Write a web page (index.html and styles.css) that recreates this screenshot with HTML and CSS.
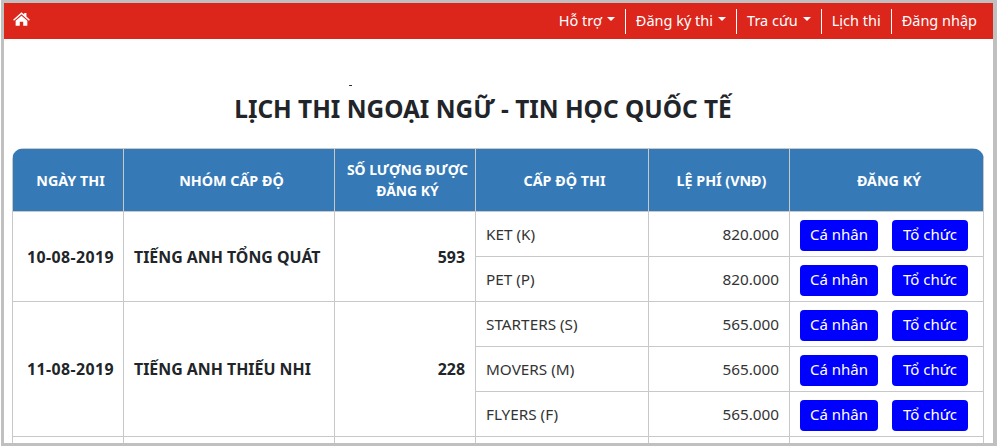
FILE: index.html
```html
<!DOCTYPE html>
<html lang="vi">
<head>
<meta charset="utf-8">
<title>Lịch thi</title>
<link rel="stylesheet" href="styles.css">
</head>
<body>
<div class="frame">
  <nav class="navbar">
    <a class="home" href="#"><svg viewBox="0 0 18 15" width="17" height="14" preserveAspectRatio="none"><path fill="#fff" d="M9 0.2 L11.9 2.8 V1.2 H14.2 V4.9 L17.9 8.2 L16.9 9.4 L9 2.5 L1.1 9.4 L0.1 8.2 Z M9 3.9 L15.2 9.3 V14.8 H10.8 V10.4 H7.2 V14.8 H2.8 V9.3 Z"/></svg></a>
    <ul class="menu">
      <li><a href="#">Hỗ trợ<i class="caret"></i></a></li>
      <li><a href="#">Đăng ký thi<i class="caret"></i></a></li>
      <li><a href="#">Tra cứu<i class="caret"></i></a></li>
      <li><a href="#">Lịch thi</a></li>
      <li><a href="#">Đăng nhập</a></li>
    </ul>
  </nav>
  <main class="content">
    <div class="mark"></div>
    <h1 class="title">LỊCH THI NGOẠI NGỮ - TIN HỌC QUỐC TẾ</h1>
    <div class="table-wrap">
      <table class="schedule">
        <colgroup>
          <col class="c1"><col class="c2"><col class="c3"><col class="c4"><col class="c5"><col class="c6">
        </colgroup>
        <thead>
          <tr><th>NGÀY THI</th><th>NHÓM CẤP ĐỘ</th><th class="narrow">SỐ LƯỢNG ĐƯỢC ĐĂNG KÝ</th><th>CẤP ĐỘ THI</th><th>LỆ PHÍ (VNĐ)</th><th>ĐĂNG KÝ</th></tr>
        </thead>
        <tbody>
          <tr><td rowspan="2" class="strong center date">10-08-2019</td><td rowspan="2" class="strong">TIẾNG ANH TỔNG QUÁT</td><td rowspan="2" class="strong right">593</td><td>KET (K)</td><td class="right">820.000</td><td class="actions"><a class="btn" href="#">Cá nhân</a><a class="btn" href="#">Tổ chức</a></td></tr>
          <tr><td>PET (P)</td><td class="right">820.000</td><td class="actions"><a class="btn" href="#">Cá nhân</a><a class="btn" href="#">Tổ chức</a></td></tr>
          <tr><td rowspan="3" class="strong center date">11-08-2019</td><td rowspan="3" class="strong">TIẾNG ANH THIẾU NHI</td><td rowspan="3" class="strong right">228</td><td>STARTERS (S)</td><td class="right">565.000</td><td class="actions"><a class="btn" href="#">Cá nhân</a><a class="btn" href="#">Tổ chức</a></td></tr>
          <tr><td>MOVERS (M)</td><td class="right">565.000</td><td class="actions"><a class="btn" href="#">Cá nhân</a><a class="btn" href="#">Tổ chức</a></td></tr>
          <tr><td>FLYERS (F)</td><td class="right">565.000</td><td class="actions"><a class="btn" href="#">Cá nhân</a><a class="btn" href="#">Tổ chức</a></td></tr>
          <tr><td></td><td></td><td></td><td></td><td></td><td></td></tr>
        </tbody>
      </table>
    </div>
  </main>
</div>
</body>
</html>
```
FILE: styles.css
```css
* { box-sizing: border-box; }
html, body { margin: 0; height: 446px; overflow: hidden; background: #fff; }
body { padding: 0 0 0 1px; font-family: "Noto Sans", "Open Sans", sans-serif; color: #212529; }
.frame { height: 446px; border: 3px solid #c0c0c0; border-right-width: 4px; overflow: hidden; background: #fff; }
.navbar { display: flex; justify-content: space-between; align-items: center; height: 36px; background: #dc261c; padding: 0 6px 0 9px; }
.home { display: flex; margin-top: -5px; }
.menu { display: flex; list-style: none; margin: 0; padding: 0; }
.menu li { border-left: 1px solid #fff; height: 25px; display: flex; align-items: center; padding: 0 10px 2px; }
.menu li:first-child { border-left: 0; }
.menu a { color: #fff; text-decoration: none; font-size: 14.5px; display: flex; align-items: center; }
.caret { width: 0; height: 0; border: 4.5px solid transparent; border-top-color: #fff; border-bottom: 0; margin: -2px 0 0 5px; }
.content { padding: 0 9px 0 8px; }
.mark { width: 3px; height: 1px; margin: 46px 0 0 337px; background: #333; }
.title { margin: 5px 0 21px; padding-right: 30px; height: 36px; line-height: 36px; text-align: center; font-size: 24.4px; font-weight: 700; }
.table-wrap { border-radius: 12px 12px 0 0; overflow: hidden; }
.schedule { width: 100%; border-collapse: collapse; table-layout: fixed; font-size: 15.3px; }
.c1 { width: 111px; } .c2 { width: 211px; } .c3 { width: 141px; } .c4 { width: 173px; } .c5 { width: 141px; } .c6 { width: auto; }
.schedule th, .schedule td { border: 1px solid #c8c8c8; }
.schedule th { height: 63px; background: #357ab7; color: #fff; font-size: 14.3px; line-height: 21px; padding: 0 0 0 5px; text-align: center; font-weight: 700; }
.schedule th.narrow { font-size: 13.9px; }
.schedule td { height: 45px; padding: 0 10px; color: #333; }
.schedule td.strong { font-size: 15.9px; font-weight: 700; color: #212529; }
.schedule td.date { letter-spacing: 0.4px; padding: 0 0 0 5px; }
.center { text-align: center; }
.right { text-align: right; }
.schedule td.actions { white-space: nowrap; font-size: 15px; padding-top: 3px; }
.btn { display: inline-block; min-width: 76px; height: 31px; line-height: 29px; padding: 0 10px; text-align: center; background: #0000ff; color: #fff; border-radius: 4px; text-decoration: none; margin-right: 14px; }
.btn:last-child { margin-right: 0; }
```
